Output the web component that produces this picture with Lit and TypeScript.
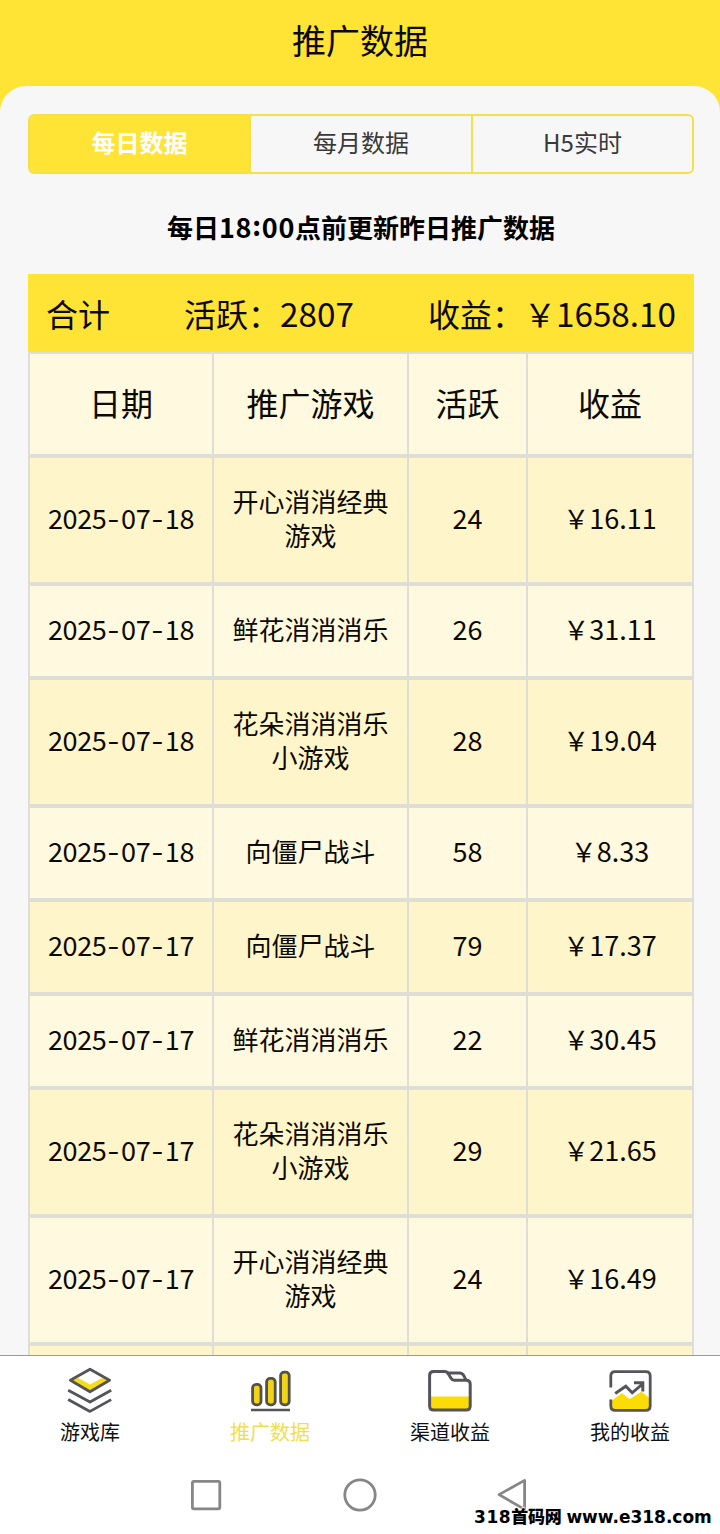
import { LitElement, html, css, svg } from "lit";
import { customElement } from "lit/decorators.js";
import { classMap } from "lit/directives/class-map.js";

interface Row {
  date: string;
  game: string[];
  active: number;
  income: string;
}

const rows: Row[] = [
  { date: "2025-07-18", game: ["开心消消经典", "游戏"], active: 24, income: "16.11" },
  { date: "2025-07-18", game: ["鲜花消消消乐"], active: 26, income: "31.11" },
  { date: "2025-07-18", game: ["花朵消消消乐", "小游戏"], active: 28, income: "19.04" },
  { date: "2025-07-18", game: ["向僵尸战斗"], active: 58, income: "8.33" },
  { date: "2025-07-17", game: ["向僵尸战斗"], active: 79, income: "17.37" },
  { date: "2025-07-17", game: ["鲜花消消消乐"], active: 22, income: "30.45" },
  { date: "2025-07-17", game: ["花朵消消消乐", "小游戏"], active: 29, income: "21.65" },
  { date: "2025-07-17", game: ["开心消消经典", "游戏"], active: 24, income: "16.49" },
  { date: "", game: [], active: 0, income: "" },
];

const icons = {
  library: svg`
    <path d="M24 3.2 L43.6 14.3 L24 25.8 L4.4 14.3 Z" fill="#fff"/>
    <path d="M4.4 14.3 L12 12 L24 18.6 L36 12 L43.6 14.3 L24 25.8 Z" fill="#f7dc1c"/>
    <path d="M24 3.2 L43.6 14.3 L24 25.8 L4.4 14.3 Z M2.2 24.2 L24 36 L45.2 24.2 M2.2 33.6 L24 45.4 L45.2 33.6"
      fill="none" stroke="#55545a" stroke-width="2.8" stroke-linejoin="round"/>`,
  data: svg`
    <g fill="#f0d419" stroke="#55504a" stroke-width="2.8">
      <rect x="6.6" y="18.4" width="8.4" height="20.4" rx="3.6"/>
      <rect x="20.6" y="12.4" width="8.6" height="26.4" rx="3.6"/>
      <rect x="34.6" y="6.2" width="8.6" height="32.6" rx="3.6"/>
    </g>
    <path d="M5 44 H44" stroke="#55545a" stroke-width="2.6"/>`,
  channel: svg`
    <path d="M4 30.6 H44 V41 Q44 44 41 44 H7 Q4 44 4 41 Z" fill="#fbdc06"/>
    <path d="M7.5 5.4 H18.8 Q20.8 5.4 21.9 7 L25 12.2 Q26.2 14.3 28.5 14.3 H40.2 Q44.2 14.3 44.2 18.3 V40 Q44.2 44 40.2 44 H7.6 Q3.6 44 3.6 40 V9.4 Q3.6 5.4 7.5 5.4 Z"
      fill="none" stroke="#55545a" stroke-width="3"/>
    <path d="M20.5 7 H33.5 Q36.5 7 38 10 L40 14" fill="none" stroke="#55545a" stroke-width="2.8"/>`,
  mine: svg`
    <path d="M4.8 35.6 L15.8 27 L23.6 33 L35.5 25.8 L44 32.6 V40 Q44 44.4 40 44.4 H9 Q4.8 44.4 4.8 40 Z" fill="#fbdc06"/>
    <path d="M4.8 21.5 V10 Q4.8 5.6 9.2 5.6 H39.8 Q44.2 5.6 44.2 10 V40 Q44.2 44.4 39.8 44.4 H9.2 Q4.8 44.4 4.8 40 V33.6"
      fill="none" stroke="#55545a" stroke-width="2.8"/>
    <path d="M9.2 27.6 L19.8 20.2 L26.2 26.8 L36.4 18.2 M28 16.8 H36.8 V25.4"
      fill="none" stroke="#55545a" stroke-width="3"/>`,
};

@customElement("app-root")
export class AppRoot extends LitElement {
  static styles = css`
    :host {
      display: flex;
      flex-direction: column;
      position: relative;
      width: 720px;
      height: 1534px;
      overflow: hidden;
      background: #ffe335;
      color: #0c0a04;
      font-family: "Noto Sans CJK SC", sans-serif;
    }
    * { box-sizing: border-box; }
    .title {
      flex: none;
      height: 86px;
      line-height: 80px;
      font-size: 34px;
      text-align: center;
    }
    .panel {
      flex: 1;
      min-height: 0;
      overflow: hidden;
      padding: 28px 26px 0 28px;
      border-radius: 26px 26px 0 0;
      background: #f7f7f7;
    }
    .tabs {
      display: grid;
      grid-template-columns: 221px 222px 1fr;
      height: 60px;
      border: 2px solid #f3e04a;
      border-radius: 6px;
      overflow: hidden;
    }
    .tab {
      border-right: 2px solid #f3e04a;
      font-size: 24px;
      line-height: 52px;
      text-align: center;
      color: #3a3a3a;
    }
    .tab:last-child { border-right: 0; }
    .tab.on { background: #ffe335; color: #fff; font-weight: 700; }
    .notice {
      height: 100px;
      line-height: 105px;
      font-size: 26px;
      font-weight: 700;
      text-align: center;
      color: #000;
    }
    .notice .num { letter-spacing: 0.7px; }
    .colon { position: relative; top: -2px; }
    .num { font-size: 1.04em; line-height: 1; }
    .date { letter-spacing: -0.35px; }
    .dash { display: inline-block; width: 14.5px; text-align: center; transform: scaleX(1.25); }
    .total {
      display: flex;
      justify-content: space-between;
      height: 78px;
      padding: 0 18px;
      line-height: 78px;
      font-size: 32px;
      background: #ffe335;
    }
    .row {
      display: grid;
      grid-template-columns: 184px 195px 119px 1fr;
      border: 2px solid #deded6;
      border-right: 0;
      background: #fff9df;
      font-size: 26px;
      line-height: 34px;
    }
    .row.alt { background: #fff5ca; }
    .cell {
      display: flex;
      align-items: center;
      justify-content: center;
      min-height: 90px;
      padding: 26px 0 30px;
      border-right: 2px solid #deded6;
      text-align: center;
      white-space: nowrap;
    }
    .head { font-size: 32px; }
    .head .cell { min-height: 100px; }
    .nav {
      flex: none;
      display: grid;
      grid-template-columns: repeat(4, 1fr);
      height: 95px;
      padding-top: 10px;
      border-top: 1px solid #9b9a92;
      background: #fff;
    }
    .item {
      display: flex;
      flex-direction: column;
      align-items: center;
      font-size: 20px;
      line-height: 36px;
      color: #111;
    }
    .item.on { color: #f2de4c; }
    .icon { flex: none; width: 48px; height: 48px; }
    .system { flex: none; display: block; width: 720px; height: 84px; background: #fff; }
    .mark {
      position: absolute;
      left: 474px;
      bottom: 4px;
      display: flex;
      align-items: baseline;
      font: 700 17px/26px "DejaVu Sans", "Noto Sans CJK SC", sans-serif;
      color: #000;
      text-shadow: 0 0 2px #fff, 0 0 2px #fff, 0 -1px 1px #fff;
      white-space: nowrap;
    }
    .count { letter-spacing: 0.6px; }
    .site { margin-right: 5px; font-family: "Noto Sans CJK SC", sans-serif; font-weight: 900; letter-spacing: -0.3px; }
  `;

  private date(d: string) {
    return d.split("-").map((p, i) => (i ? html`<span class="dash">-</span>${p}` : p));
  }

  private item(icon: keyof typeof icons, label: string, on = false) {
    return html`<div class=${classMap({ item: true, on })}>
      <svg class="icon" viewBox="0 0 48 48">${icons[icon]}</svg><span>${label}</span>
    </div>`;
  }

  render() {
    return html`
      <div class="title">推广数据</div>
      <div class="panel">
        <div class="tabs">
          <div class="tab on">每日数据</div>
          <div class="tab">每月数据</div>
          <div class="tab">H5实时</div>
        </div>
        <div class="notice">每日<span class="num">18<span class="colon">:</span>00</span>点前更新昨日推广数据</div>
        <div class="total">
          <span>合计</span>
          <span>活跃：<span class="num">2807</span></span>
          <span>收益：￥<span class="num">1658.10</span></span>
        </div>
        <div class="row head">
          <div class="cell">日期</div>
          <div class="cell">推广游戏</div>
          <div class="cell">活跃</div>
          <div class="cell">收益</div>
        </div>
        ${rows.map(
          (r, i) => html`<div class=${classMap({ row: true, alt: i % 2 === 0 })}>
            <div class="cell"><span class="num date">${this.date(r.date)}</span></div>
            <div class="cell"><span>${r.game.map((g, n) => (n ? html`<br />${g}` : g))}</span></div>
            <div class="cell"><span class="num">${r.active || ""}</span></div>
            <div class="cell"><span>${r.income ? html`￥<span class="num">${r.income}</span>` : ""}</span></div>
          </div>`
        )}
      </div>
      <div class="nav">
        ${this.item("library", "游戏库")} ${this.item("data", "推广数据", true)}
        ${this.item("channel", "渠道收益")} ${this.item("mine", "我的收益")}
      </div>
      <svg class="system" viewBox="0 0 720 84" fill="none" stroke="#868686" stroke-width="2.8" stroke-linejoin="round">
        <rect x="192.4" y="31.4" width="27.4" height="27.4" rx="1.5" />
        <circle cx="360" cy="45" r="15.2" />
        <path d="M499 44.6 L524.6 30.4 V59.4 Z" />
      </svg>
      <div class="mark">
        <span class="count">318</span><span class="site">首码网</span><span class="url">www.e318.com</span>
      </div>
    `;
  }
}
